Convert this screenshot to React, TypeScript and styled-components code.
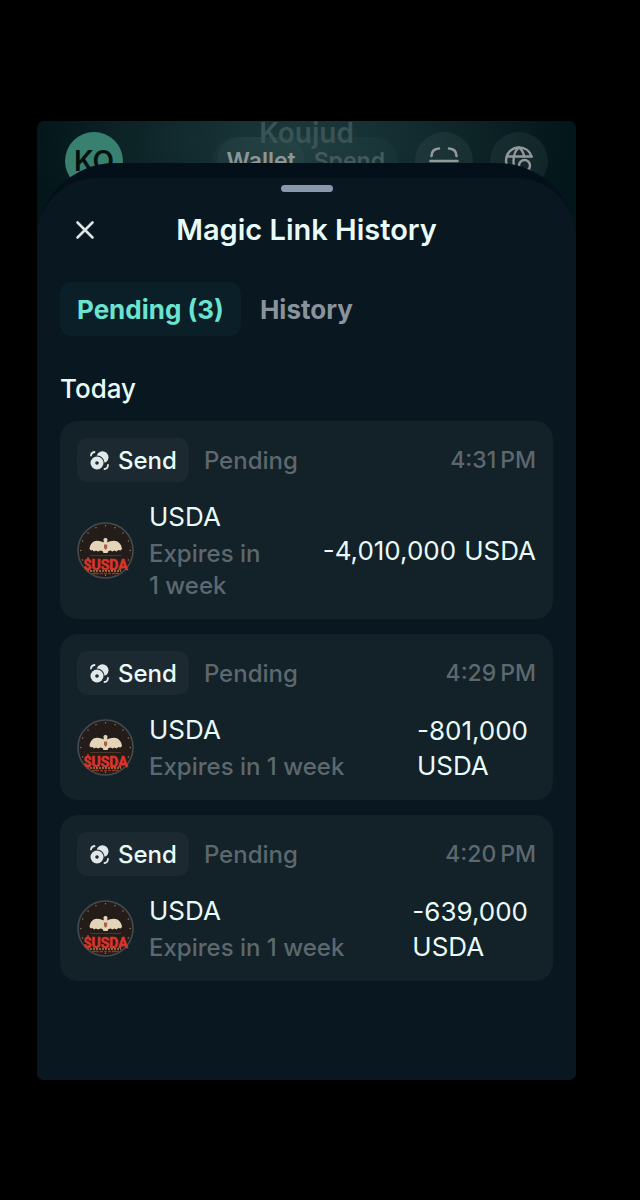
import React, { useState } from 'react';
import styled, { createGlobalStyle } from 'styled-components';

const GlobalStyle = createGlobalStyle`
  * {
    box-sizing: border-box;
  }

  body {
    margin: 0;
    background: #000;
    color: #e9fbf8;
    font-family: Inter, 'Liberation Sans', sans-serif;
  }

  h1, h2, p, ul {
    margin: 0;
    padding: 0;
  }

  button {
    border: none;
    background: none;
    padding: 0;
    color: inherit;
    font-family: inherit;
    cursor: pointer;
  }
`;

const Page = styled.div`
  display: flex;
  min-height: 100vh;
  padding: 121px 64px 120px 37px;
`;

const Screen = styled.div`
  position: relative;
  flex: 1;
  min-width: 0;
  display: flex;
  flex-direction: column;
  overflow: hidden;
  border-radius: 7px;
  background: radial-gradient(ellipse 270px 150px at 49% 20px, #1c3a3c 0%, #11292c 50%, #03161a 100%);
`;

const TopBar = styled.header`
  display: flex;
  align-items: center;
  gap: 17px;
  padding: 11px 28px 31px;
`;

const AccountName = styled.p`
  position: absolute;
  top: 0;
  left: 0;
  right: 0;
  text-align: center;
  font-size: 28px;
  line-height: 24px;
  font-weight: 600;
  color: #3a5355;
`;

const Avatar = styled.button`
  width: 58px;
  height: 58px;
  margin-right: auto;
  border-radius: 50%;
  background: #38806f;
  color: #02100f;
  font-size: 28px;
  font-weight: 600;
`;

const ModeSwitch = styled.div`
  display: flex;
  height: 48px;
  padding: 0 4px;
  border-radius: 24px;
  background: rgba(120, 160, 160, 0.05);
`;

const ModeButton = styled.button<{ $isActive: boolean }>`
  padding: 0 9px;
  border-radius: 24px;
  background: ${props => props.$isActive ? 'rgba(120, 160, 160, 0.06)' : 'transparent'};
  color: ${props => props.$isActive ? '#8c9696' : '#43595b'};
  font-size: 23px;
  font-weight: 600;
`;

const RoundButton = styled.button`
  display: flex;
  align-items: center;
  justify-content: center;
  width: 58px;
  height: 58px;
  border-radius: 50%;
  background: rgba(120, 150, 150, 0.11);
  color: #93999a;
`;

const SheetShadow = styled.div`
  position: relative;
  flex: 1;
  display: flex;
  margin-top: -58px;
  padding-top: 15px;
  border-radius: 78px 78px 0 0;
  background: #03101a;
`;

const Sheet = styled.main`
  flex: 1;
  min-width: 0;
  padding: 7px 23px 24px;
  border-radius: 60px 60px 0 0;
  background: #091721;
`;

const Handle = styled.div`
  width: 52px;
  height: 7px;
  margin: 0 auto;
  border-radius: 4px;
  background: #8a98ab;
`;

const SheetHeader = styled.div`
  display: grid;
  grid-template-columns: 50px 1fr 50px;
  align-items: center;
  height: 76px;
`;

const CloseButton = styled.button`
  display: flex;
  align-items: center;
  justify-content: center;
  height: 50px;
  color: #dfe3e4;
`;

const Title = styled.h1`
  text-align: center;
  font-size: 29px;
  line-height: 34px;
  font-weight: 600;
`;

const Tabs = styled.div`
  display: flex;
  gap: 2px;
  margin-top: 14px;
`;

const Tab = styled.button<{ $isActive: boolean }>`
  height: 54px;
  padding: 0 17px;
  border-radius: 12px;
  background: ${props => props.$isActive ? '#0a1f27' : 'transparent'};
  color: ${props => props.$isActive ? '#6ae4d0' : '#8a9399'};
  font-size: 26px;
  font-weight: 700;
`;

const DayTitle = styled.h2`
  margin-top: 36px;
  font-size: 26px;
  line-height: 34px;
  font-weight: 500;
`;

const CardList = styled.ul`
  display: flex;
  flex-direction: column;
  gap: 15px;
  margin-top: 15px;
  list-style: none;
`;

const Card = styled.li`
  padding: 17px;
  border-radius: 18px;
  background: #132129;
`;

const CardHeader = styled.div`
  display: flex;
  align-items: center;
  gap: 15px;
`;

const Badge = styled.span`
  display: flex;
  align-items: center;
  gap: 8px;
  height: 44px;
  padding: 0 12px;
  border-radius: 11px;
  background: #1c2931;
  font-size: 24px;
  font-weight: 500;
`;

const Status = styled.span`
  color: #5d686e;
  font-size: 24px;
  font-weight: 500;
`;

const Time = styled.time`
  margin-left: auto;
  color: #5d686e;
  font-size: 23px;
  font-weight: 500;
`;

const CardBody = styled.div`
  display: flex;
  align-items: center;
  gap: 15px;
  margin-top: 17px;
`;

const Info = styled.div`
  flex: 1;
  min-width: 0;
`;

const TokenName = styled.p`
  font-size: 26px;
  line-height: 35px;
`;

const Expiry = styled.p`
  margin-top: 4px;
  color: #5d686e;
  font-size: 24px;
  line-height: 32px;
  font-weight: 500;
`;

const Amount = styled.p<{ $stacked: boolean }>`
  display: flex;
  flex-direction: ${props => props.$stacked ? 'column' : 'row'};
  column-gap: 8px;
  padding-right: ${props => props.$stacked ? '8px' : '0'};
  font-size: 26px;
  line-height: 35px;
  white-space: nowrap;
`;

const ScanIcon = () => (
  <svg width="32" height="32" viewBox="0 0 32 32" fill="none" stroke="currentColor" strokeWidth="2.6" strokeLinecap="round">
    <path d="M3.500 11C3.700 6.500 6.500 3.700 11 3.500M21 3.500C25.500 3.700 28.300 6.500 28.500 11M2.500 16H29.500" />
    <path d="M3.500 21C3.700 25.500 6.500 28.300 11 28.500M21 28.500C25.500 28.300 28.300 25.500 28.500 21" />
  </svg>
);

const GlobeSearchIcon = () => (
  <svg width="32" height="32" viewBox="0 0 32 32" fill="none" stroke="currentColor" strokeWidth="2.4" strokeLinecap="round">
    <path d="M28.500 11.500C27 6 22 2.500 16 2.500C8.500 2.500 3 8.500 3 16C3 22.500 7.500 28 13.500 29" />
    <path d="M4 11.500H28.500" />
    <path d="M16 2.500C12 5.500 10.500 10.500 10.500 16C10.500 21 11.500 26 13.500 29M16 2.500C19 4.500 20.500 8 21.200 11.500" />
    <circle cx="21.500" cy="20.500" r="5.500" />
    <path d="M25.500 24.500L29 28" />
  </svg>
);

const CloseIcon = () => (
  <svg width="20" height="20" viewBox="0 0 20 20" fill="none" stroke="currentColor" strokeWidth="2.6" strokeLinecap="round">
    <path d="M2.500 2.500L17.500 17.500M17.500 2.500L2.500 17.500" />
  </svg>
);

const CoinsIcon = () => (
  <svg width="21" height="21" viewBox="0 0 21 21" fill="none">
    <circle cx="13.500" cy="7.200" r="6" fill="#e1e8e9" />
    <circle cx="8" cy="13" r="7.600" fill="#1c2931" />
    <circle cx="8" cy="13" r="6.500" fill="#e1e8e9" />
    <circle cx="8" cy="13" r="1.800" fill="#1c2931" />
    <path d="M2 5.500C2.200 3.400 3.400 2.200 5.500 2M19 15C18.800 17.500 17.600 18.900 15.500 19" stroke="#e1e8e9" strokeWidth="1.800" strokeLinecap="round" />
  </svg>
);

const tickAngles = Array.from({ length: 16 }, (_, i) => i * 22.5);

const TokenLogo = () => (
  <svg width="57" height="57" viewBox="0 0 57 57" role="img" aria-label="$USDA">
    <circle cx="28.5" cy="28.5" r="27.500" fill="#241c19" stroke="#454a4d" strokeWidth="1.600" />
    {tickAngles.map(angle => (
      <circle key={angle} cx="28.5" cy="3.800" r="0.700" fill="#8b8375" transform={`rotate(${angle} 28.5 28.5)`} />
    ))}
    <path
      d="M12.500 27C13 22 16 18.800 20 18.800C23.500 18.800 25.500 20 26.800 20.500L26.500 17.500C26.800 15.500 30.200 15.500 30.500 17.500L30.200 20.500C32 19.500 34 18.800 37 18.800C41 18.800 44.500 22 45 27L43.500 28.500L41.500 28L39.500 29.500L37.500 28.500L35.500 29.500L33.500 28.500L31.500 29L30.500 31H26.500L25.500 29L23.500 28.500L21 29.500L19 28.500L17 29.500L15.500 28L14 28.500Z"
      fill="#e5d5b8"
    />
    <path d="M27 22.500H30.200V26L28.600 28L27 26Z" fill="#a9604a" />
    <path d="M13 33.500H44" stroke="#51402f" strokeWidth="0.800" />
    <text
      x="28.500"
      y="48"
      textAnchor="middle"
      fill="#d8352d"
      stroke="#d8352d"
      strokeWidth="0.600"
      fontFamily="Roboto, 'Liberation Sans', sans-serif"
      fontSize="14"
      fontWeight="700"
    >
      $USDA
    </text>
    <path d="M13 49H44" stroke="#e9b25c" strokeWidth="1.200" strokeDasharray="2 1" />
    <path d="M15 51.500H42" stroke="#8f3427" strokeWidth="1.400" strokeDasharray="3 1" />
  </svg>
);

interface Transfer {
  id: string;
  time: string;
  token: string;
  expiry: string;
  value: string;
  stacked: boolean;
}

const transfers: Transfer[] = [
  { id: '1', time: '4:31\u2009PM', token: 'USDA', expiry: 'Expires in 1\u00a0week', value: '-4,010,000', stacked: false },
  { id: '2', time: '4:29\u2009PM', token: 'USDA', expiry: 'Expires in 1\u00a0week', value: '-801,000', stacked: true },
  { id: '3', time: '4:20\u2009PM', token: 'USDA', expiry: 'Expires in 1\u00a0week', value: '-639,000', stacked: true }
];

const tabs = [
  { id: 'pending', name: `Pending (${transfers.length})` },
  { id: 'history', name: 'History' }
];

const App: React.FC = () => {
  const [activeTab, setActiveTab] = useState('pending');

  return (
    <Page>
      <GlobalStyle />
      <Screen>
        <TopBar>
          <Avatar>KO</Avatar>
          <ModeSwitch>
            <ModeButton $isActive>Wallet</ModeButton>
            <ModeButton $isActive={false}>Spend</ModeButton>
          </ModeSwitch>
          <RoundButton aria-label="Scan">
            <ScanIcon />
          </RoundButton>
          <RoundButton aria-label="Explore">
            <GlobeSearchIcon />
          </RoundButton>
        </TopBar>
        <AccountName>Koujud</AccountName>

        <SheetShadow>
          <Sheet>
            <Handle />
            <SheetHeader>
              <CloseButton aria-label="Close">
                <CloseIcon />
              </CloseButton>
              <Title>Magic Link History</Title>
            </SheetHeader>

            <Tabs role="tablist">
              {tabs.map(tab => (
                <Tab
                  key={tab.id}
                  role="tab"
                  aria-selected={activeTab === tab.id}
                  $isActive={activeTab === tab.id}
                  onClick={() => setActiveTab(tab.id)}
                >
                  {tab.name}
                </Tab>
              ))}
            </Tabs>

            <DayTitle>Today</DayTitle>
            <CardList>
              {transfers.map(transfer => (
                <Card key={transfer.id}>
                  <CardHeader>
                    <Badge>
                      <CoinsIcon />
                      Send
                    </Badge>
                    <Status>Pending</Status>
                    <Time>{transfer.time}</Time>
                  </CardHeader>
                  <CardBody>
                    <TokenLogo />
                    <Info>
                      <TokenName>{transfer.token}</TokenName>
                      <Expiry>{transfer.expiry}</Expiry>
                    </Info>
                    <Amount $stacked={transfer.stacked}>
                      <span>{transfer.value}</span>
                      <span>{transfer.token}</span>
                    </Amount>
                  </CardBody>
                </Card>
              ))}
            </CardList>
          </Sheet>
        </SheetShadow>
      </Screen>
    </Page>
  );
};

export default App;
